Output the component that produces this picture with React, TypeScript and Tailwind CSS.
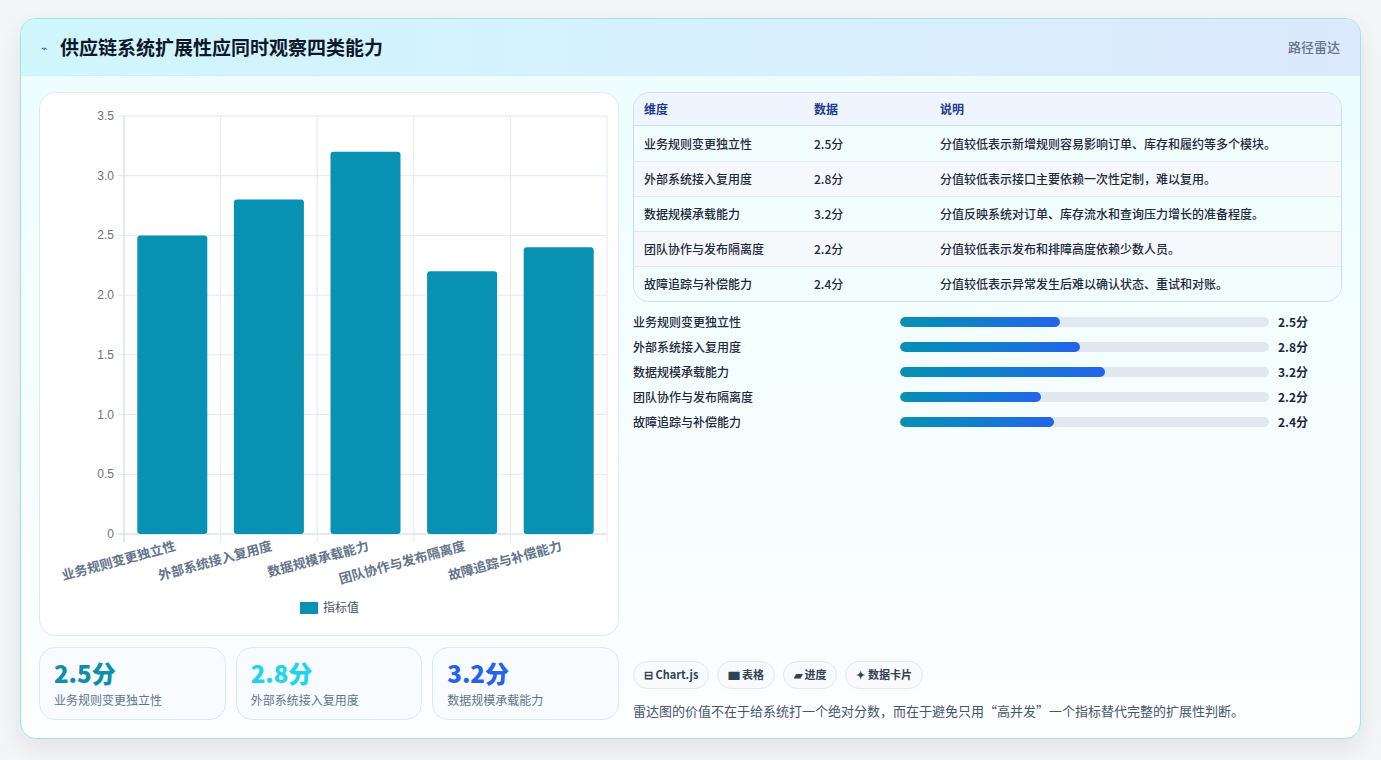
const F = { fontFamily: '"Noto Sans CJK SC","Noto Sans",sans-serif' };
const data = [
  { n: '业务规则变更独立性', v: 2.5, d: '分值较低表示新增规则容易影响订单、库存和履约等多个模块。' },
  { n: '外部系统接入复用度', v: 2.8, d: '分值较低表示接口主要依赖一次性定制，难以复用。' },
  { n: '数据规模承载能力', v: 3.2, d: '分值反映系统对订单、库存流水和查询压力增长的准备程度。' },
  { n: '团队协作与发布隔离度', v: 2.2, d: '分值较低表示发布和排障高度依赖少数人员。' },
  { n: '故障追踪与补偿能力', v: 2.4, d: '分值较低表示异常发生后难以确认状态、重试和对账。' },
];

function Chart() {
  const x0 = 84, x1 = 567, y0 = 23, y1 = 441;
  const cw = (x1 - x0) / 5;
  const ticks = [0, 0.5, 1, 1.5, 2, 2.5, 3, 3.5];
  const ys = (v: number) => y1 - (v / 3.5) * (y1 - y0);
  return (
    <svg width="578" height="542" viewBox="0 0 578 542" style={F}>
      {ticks.map((t) => (
        <g key={t}>
          <line x1={x0 - 6} x2={x1} y1={ys(t)} y2={ys(t)} stroke={t === 0 ? '#cbd5e1' : '#e2e8f0'} />
          <text x={x0 - 10} y={ys(t) + 4} textAnchor="end" fontSize="12" fill="#6b7280" fontFamily="Liberation Sans, sans-serif">{t === 0 ? '0' : t.toFixed(1)}</text>
        </g>
      ))}
      {[0, 1, 2, 3, 4, 5].map((i) => (
        <line key={i} x1={x0 + i * cw} x2={x0 + i * cw} y1={y0} y2={y1 + 8} stroke={i === 0 ? '#cbd5e1' : '#e2e8f0'} />
      ))}
      {data.map((d, i) => {
        const cx = x0 + cw * i + cw / 2;
        return (
          <g key={d.n}>
            <rect x={cx - 35} y={ys(d.v)} width="70" height={y1 - ys(d.v)} rx="3" fill="#0891b2" />
            <text x={cx + 4} y={y1 + 16} textAnchor="end" fontSize="13" fontWeight="700" fill="#64748b" transform={`rotate(-15 ${cx + 4} ${y1 + 16})`}>{d.n}</text>
          </g>
        );
      })}
      <rect x="260" y="509" width="18" height="12" fill="#0891b2" />
      <text x="283" y="519" fontSize="12" fill="#475569">指标值</text>
    </svg>
  );
}

export default function App() {
  return (
    <div className="min-h-[760px] bg-[#f4f5f7] px-5 pt-[18px] pb-5" style={F}>
      <div className="rounded-2xl border border-[#99e4ee] bg-gradient-to-b from-[#ecfdfe] to-[#fdfeff] shadow-[0_10px_24px_rgba(0,0,0,0.08)] overflow-hidden">
        <div className="h-[57px] flex items-center justify-between px-5 bg-gradient-to-r from-[#cff7fc] to-[#dde9fd] border-b border-[#d4eef5]">
          <div className="flex items-center gap-3">
            <span className="text-[11px] text-[#2563eb]">⌁</span>
            <h1 className="text-[19px] font-bold text-[#0f172a]">供应链系统扩展性应同时观察四类能力</h1>
          </div>
          <span className="text-[13px] font-medium text-[#64748b]">路径雷达</span>
        </div>
        <div className="flex gap-[14px] px-[18px] pt-4 pb-[18px]">
          <div className="w-[580px] flex flex-col gap-[11px]">
            <div className="h-[544px] rounded-2xl border border-[#e2e8f0] bg-white"><Chart /></div>
            <div className="grid grid-cols-3 gap-[10px]">
              {[['2.5分', 'text-[#0e8ea9]', data[0].n], ['2.8分', 'text-[#22d3ee]', data[1].n], ['3.2分', 'text-[#2563eb]', data[2].n]].map(([v, c, n]) => (
                <div key={v} className="h-[73px] rounded-2xl border border-[#dbe7f3] bg-[#f8fbff] px-[14px] pt-[10px]">
                  <div className={`text-[24px] leading-[30px] font-extrabold ${c}`}>{v}</div>
                  <div className="text-[12px] text-[#64748b] mt-[3px]">{n}</div>
                </div>
              ))}
            </div>
          </div>
          <div className="flex-1 flex flex-col">
            <div className="rounded-2xl border border-[#cfdbe8] overflow-hidden">
              <div className="flex h-[33px] items-center bg-[#eef5fe] border-b border-[#cfdbe8] text-[12px] font-bold text-[#1e3a8a] px-[10px]">
                <div className="w-[170px]">维度</div><div className="w-[126px]">数据</div><div>说明</div>
              </div>
              {data.map((d, i) => (
                <div key={d.n} className={`flex h-[35px] items-center px-[10px] text-[12px] font-medium text-[#1e293b] ${i > 0 ? 'border-t border-[#e5e9ef]' : ''} ${i % 2 ? 'bg-[#f6f9fc]' : 'bg-[#f2fdfe]'}`}>
                  <div className="w-[170px]">{d.n}</div><div className="w-[126px]">{d.v}分</div><div>{d.d}</div>
                </div>
              ))}
            </div>
            <div className="mt-[11px] flex flex-col gap-[7px]">
              {data.map((d) => (
                <div key={d.n} className="flex items-center h-[18px] text-[12px] font-medium text-[#1e293b]">
                  <div className="w-[267px]">{d.n}</div>
                  <div className="w-[369px] h-[10px] rounded-full bg-[#e2e8f0] overflow-hidden">
                    <div className="h-full rounded-full bg-gradient-to-r from-[#0891b2] to-[#2563eb]" style={{ width: `${(d.v / 5.75) * 100}%` }} />
                  </div>
                  <div className="ml-[9px] font-bold">{d.v}分</div>
                </div>
              ))}
            </div>
            <div className="mt-auto">
              <div className="flex gap-[8px]">
                {['⊟ Chart.js', '▆ 表格', '▰ 进度', '✦ 数据卡片'].map((t) => (
                  <span key={t} className="h-[28px] px-[10px] flex items-center rounded-full border border-[#e2e8f0] bg-[#f8fafc] text-[11px] font-bold text-[#334155]">{t}</span>
                ))}
              </div>
              <p className="mt-[12px] text-[13px] text-[#475569]">雷达图的价值不在于给系统打一个绝对分数，而在于避免只用“高并发”一个指标替代完整的扩展性判断。</p>
            </div>
          </div>
        </div>
      </div>
    </div>
  );
}
